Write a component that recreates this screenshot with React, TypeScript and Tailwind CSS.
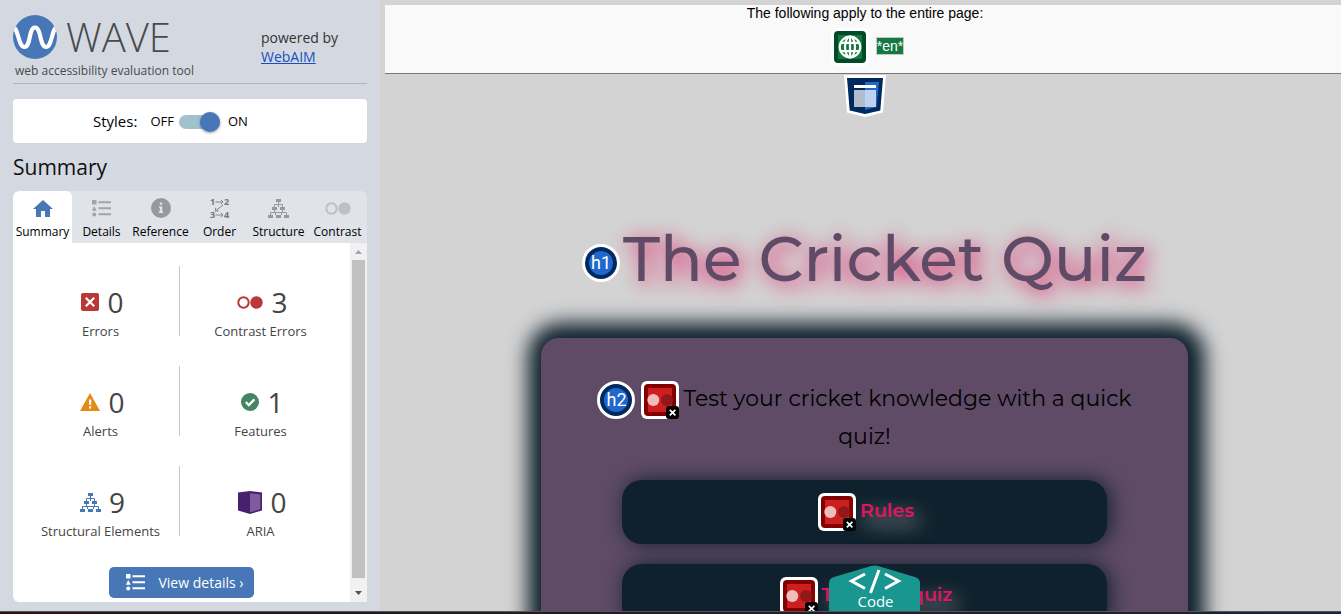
import React, { useState } from "react";

type IconProps = { className?: string };

function WaveLogo() {
  return (
    <svg viewBox="0 0 44 44" className="size-11 shrink-0" aria-hidden="true">
      <clipPath id="logo-disc">
        <circle cx="22" cy="22" r="22" />
      </clipPath>
      <circle cx="22" cy="22" r="22" fill="#4777b7" />
      <path
        d="M-1 11.5C5.500 11.500 5 32 11.500 32S15.500 12.500 22 12.500 26.500 32 33 32 38.500 11.500 45 11.500"
        fill="none"
        stroke="#fff"
        strokeWidth="4.200"
        clipPath="url(#logo-disc)"
      />
    </svg>
  );
}

function HomeIcon({ className }: IconProps) {
  return (
    <svg viewBox="0 0 20 17" width="20" height="17" className={className} fill="#4777b7" aria-hidden="true">
      <path d="M10 0 20 9h-3v8h-5v-6H8v6H3V9H0z" />
    </svg>
  );
}

function ListIcon({ className }: IconProps) {
  return (
    <svg viewBox="0 0 19 17" width="19" height="17" className={className} fill="currentColor" aria-hidden="true">
      <path d="M0 0h4.500v4.500H0zM2.200 6 4.700 10.800H-.2zM6.500 1.300H19v2H6.500zM6.500 7.300H19v2H6.500zM6.500 13.300H19v2H6.500z" />
      <circle cx="2.200" cy="14.500" r="2" />
    </svg>
  );
}

function InfoIcon({ className }: IconProps) {
  return (
    <svg viewBox="0 0 20 20" width="20" height="20" className={className} aria-hidden="true">
      <circle cx="10" cy="10" r="10" fill="#97999c" />
      <path d="M8.800 4.500h2.400v2.200H8.800zM8 8.200h3.200v5.300h1v1.500H7.800v-1.500h1V9.700H8z" fill="#e0e3e7" />
    </svg>
  );
}

function OrderIcon({ className }: IconProps) {
  return (
    <svg viewBox="-2 -4 24 29" width="24" height="29" className={className} aria-hidden="true">
      <g fill="#75777a" fontFamily="Open Sans, sans-serif" fontSize="9" fontWeight="700">
        <text x="0" y="7">1</text>
        <text x="14" y="7">2</text>
        <text x="0" y="20">3</text>
        <text x="14" y="20">4</text>
      </g>
      <path d="M5.500 4H13M10.800 1.800 13 4l-2.200 2.200M5.500 17H13M10.800 14.800 13 17l-2.200 2.200M13 7 5.500 12.800M5.700 9.800l-.5 3.300 3.500-.3" fill="none" stroke="#85878a" />
    </svg>
  );
}

function StructureIcon({ className }: IconProps) {
  return (
    <svg viewBox="0 0 21 19" width="21" height="19" className={className} aria-hidden="true">
      <path d="M10.500 3v5M6.500 8V5.500h8V8M6.500 10v3M14.500 10v3M2.500 16v-2.500h16V16M7.500 16v-2.500M13.500 16v-2.500" fill="none" stroke="currentColor" />
      <path d="M8 0h5v3H8zM4 8h5v3H4zM12 8h5v3h-5zM0 16h5v3H0zM8 16h5v3H8zM16 16h5v3h-5z" fill="currentColor" />
    </svg>
  );
}

function ContrastIcon({ className }: IconProps) {
  return (
    <svg viewBox="0 0 26 13" width="26" height="13" className={className} aria-hidden="true">
      <circle cx="6.500" cy="6.500" r="5.200" fill="none" stroke="currentColor" strokeWidth="2" />
      <circle cx="19.500" cy="6.500" r="6.200" fill="currentColor" />
    </svg>
  );
}

function ErrorIcon() {
  return (
    <svg viewBox="0 0 18 18" width="18" height="18" aria-hidden="true">
      <rect width="18" height="18" rx="2" fill="#b93838" />
      <path d="m4.800 4.800 8.400 8.400m0-8.400-8.400 8.400" stroke="#fff" strokeWidth="2.200" />
    </svg>
  );
}

function AlertIcon() {
  return (
    <svg viewBox="0 0 20 18" width="20" height="18" aria-hidden="true">
      <path d="M10 0 20 18H0z" fill="#e38b17" />
      <path d="M9 6.500h2.200v5.200H9zM9 13.300h2.200v2.200H9z" fill="#fff" />
    </svg>
  );
}

function FeatureIcon() {
  return (
    <svg viewBox="0 0 18 18" width="18" height="18" aria-hidden="true">
      <circle cx="9" cy="9" r="9" fill="#448564" />
      <path d="m4.800 9 3 3 5.600-5.600" stroke="#fff" strokeWidth="2.300" fill="none" />
    </svg>
  );
}

function AriaIcon() {
  return (
    <svg viewBox="0 0 24 23" width="24" height="23" aria-hidden="true">
      <path d="M0 1.500 12 0l12 1.500v18L12 23 0 19.500z" fill="#47216f" />
      <path d="m12 2.200 10.300 1.200v14.800L12 21.200z" fill="#7f5b9d" />
    </svg>
  );
}

const tabs = [
  { name: "Summary", icon: <HomeIcon /> },
  { name: "Details", icon: <ListIcon className="text-[#a2a4a7]" /> },
  { name: "Reference", icon: <InfoIcon /> },
  { name: "Order", icon: <OrderIcon /> },
  { name: "Structure", icon: <StructureIcon className="text-[#97999c]" /> },
  { name: "Contrast", icon: <ContrastIcon className="text-[#bdc0c5]" /> },
];

const totals = [
  { label: "Errors", count: 0, icon: <ErrorIcon /> },
  { label: "Contrast Errors", count: 3, icon: <ContrastIcon className="text-[#b93838]" /> },
  { label: "Alerts", count: 0, icon: <AlertIcon /> },
  { label: "Features", count: 1, icon: <FeatureIcon /> },
  { label: "Structural Elements", count: 9, icon: <StructureIcon className="text-[#4777b7]" /> },
  { label: "ARIA", count: 0, icon: <AriaIcon /> },
];

function Sidebar() {
  const [styles, setStyles] = useState(true);
  const [tab, setTab] = useState("Summary");
  return (
    <aside className="flex w-[380px] shrink-0 flex-col bg-[#d4d9e1] px-[13px] pb-[9px] font-['Open_Sans',sans-serif]">
      <header className="flex h-[84px] shrink-0 justify-between border-b border-[#b2b6ba] pt-[15px]">
        <div className="text-[#484a4d]">
          <div className="flex items-center gap-[9px]">
            <WaveLogo />
            <span className="text-[40px] leading-[44px] font-light">WAVE</span>
          </div>
          <p className="pl-[2px] text-xs leading-6">web accessibility evaluation tool</p>
        </div>
        <p className="w-[106px] pt-[13px] text-sm leading-[19px] text-[#333]">
          powered by
          <br />
          <a href="#webaim" className="text-[#1550c0] underline">WebAIM</a>
        </p>
      </header>

      <label className="mt-[15px] flex h-11 shrink-0 items-center rounded bg-white pt-px pl-20 text-black">
        <span className="text-[15px]">Styles:</span>
        <span className="ml-[13px] text-[13px]">OFF</span>
        <input
          type="checkbox"
          role="switch"
          checked={styles}
          onChange={(e) => setStyles(e.target.checked)}
          className="mx-[5px] mt-px flex h-[14px] w-[41px] appearance-none items-center rounded-full bg-[#a1c2cc] before:size-5 before:shrink-0 before:rounded-full before:bg-[#4777b7] before:shadow-[0_1px_3px_rgba(0,0,0,0.4)] checked:justify-end"
        />
        <span className="ml-[3px] text-[13px]">ON</span>
      </label>

      <h1 className="mt-2 mb-2 text-[21px] leading-8 text-[#111]">Summary</h1>

      <nav className="grid h-[52px] shrink-0 grid-cols-6 overflow-hidden rounded-t-md bg-[#e0e3e7]">
        {tabs.map((t) => (
          <button
            key={t.name}
            onClick={() => setTab(t.name)}
            className={
              "flex flex-col items-center rounded-t-md pt-[5px] text-xs leading-4 text-black " +
              (tab === t.name ? "bg-white" : "")
            }
          >
            <span className="flex h-[24px] items-center">{t.icon}</span>
            <span className="mt-1">{t.name}</span>
          </button>
        ))}
      </nav>

      <section className="flex min-h-0 flex-1 overflow-hidden rounded-bl-md bg-white">
        <div className="min-w-0 flex-1 overflow-hidden px-[9px] pt-[23px]">
          <ul className="grid grid-cols-[158px_1fr] gap-y-[30px]">
            {totals.map((t) => (
              <li
                key={t.label}
                className="flex h-[70px] flex-col items-center border-[#c9c9c9] pt-4 text-[#444] odd:border-r"
              >
                <div className="flex items-center gap-2 pl-1">
                  {t.icon}
                  <span className="text-[28px] leading-10">{t.count}</span>
                </div>
                <span className="text-[13px] leading-[18px]">{t.label}</span>
              </li>
            ))}
          </ul>
          <button className="mx-auto mt-[31px] flex h-[31px] items-center gap-[13px] rounded-[5px] bg-[#4777b7] pr-[10px] pl-[17px] text-sm text-white">
            <ListIcon />
            View details ›
          </button>
        </div>
        <div className="flex w-[17px] shrink-0 flex-col items-center bg-[#f1f1f1]" aria-hidden="true">
          <svg viewBox="0 0 17 17" className="size-[17px]" fill="#a3a3a3">
            <path d="m8.500 7 3.500 4H5z" />
          </svg>
          <div className="w-[13px] flex-1 bg-[#c1c1c1]" />
          <svg viewBox="0 0 17 24" className="h-6 w-[17px]" fill="#505050">
            <path d="m8.500 17-3.500-4h7z" />
          </svg>
        </div>
      </section>
    </aside>
  );
}

function HeadingBadge({ level }: { level: number }) {
  return (
    <span className="inline-flex size-[38px] shrink-0 items-center justify-center rounded-full border-3 border-white bg-[#00295e] align-middle">
      <span className="flex size-6 items-center justify-center rounded-full bg-[#2068cd] font-[Roboto,sans-serif] text-lg leading-6 font-normal text-white">
        h{level}
      </span>
    </span>
  );
}

function ContrastBadge() {
  return (
    <svg viewBox="0 0 38 38" className="inline-block size-[38px] shrink-0 align-middle" aria-label="Very low contrast">
      <rect width="38" height="38" rx="6" fill="#fff" />
      <rect x="3" y="3" width="32" height="32" rx="4" fill="#830000" />
      <rect x="7" y="7" width="24" height="24" fill="#cc2020" />
      <circle cx="26" cy="19" r="6" fill="#921818" />
      <circle cx="12.300" cy="19" r="6" fill="#f0bcbc" />
      <rect x="25" y="25" width="13" height="13" rx="3" fill="#000" />
      <path d="m28.800 28.800 5.600 5.600m0-5.600-5.600 5.600" stroke="#fff" strokeWidth="1.700" />
    </svg>
  );
}

function LanguageBadge() {
  return (
    <svg viewBox="0 0 38 38" className="size-[38px]" aria-label="Language">
      <rect width="38" height="38" rx="6" fill="#fff" />
      <rect x="3" y="3" width="32" height="32" rx="4" fill="#004a25" />
      <rect x="7" y="7" width="24" height="24" fill="#147843" />
      <g fill="none" stroke="#fff" strokeWidth="2.200">
        <circle cx="19" cy="19" r="10.300" />
        <ellipse cx="19" cy="19" rx="5" ry="10.300" />
        <path d="M19 8.500v21M10 14.800h18M10 23.200h18" />
      </g>
    </svg>
  );
}

function MainBadge() {
  return (
    <svg viewBox="0 0 42 42" className="h-[42px] w-[42px]" aria-label="Main content">
      <path d="M0 0h42l-3 37.500L21 42 3 37.500z" fill="#fff" />
      <path d="M3 3h36l-2.700 32.500L21 39 5.700 35.500z" fill="#00295e" />
      <path d="M21 7h14l-2.500 25L21 35z" fill="#2068cd" />
      <path d="M10 10h22v3H10z" fill="#fff" />
      <path d="M10 15h11v17H10z" fill="#b1bdcd" />
      <path d="M21 15h11v17H21z" fill="#bdd2f0" />
    </svg>
  );
}

function QuizLink({ children }: { children: React.ReactNode }) {
  return (
    <a
      href="#quiz"
      className="flex h-16 w-3/4 shrink-0 items-center justify-center gap-1 rounded-[20px] bg-[#0f212c] pl-[3px] text-[19px] leading-6 font-semibold text-[#e0145f] shadow-[3px_0_20px_#0f212c]"
    >
      <ContrastBadge />
      <span className="pb-[2px] [text-shadow:5px_8px_20px_#d3d3d3]">{children}</span>
    </a>
  );
}

function Page() {
  return (
    <main className="relative flex min-w-0 flex-1 flex-col overflow-hidden border-t-[5px] border-l-[5px] border-[#d3d3d3] bg-[#d3d3d3]">
      <div className="flex h-[69px] shrink-0 flex-col items-center border-b border-[#777] bg-[#f9f9f9] pl-1 font-['Liberation_Sans',sans-serif] text-sm text-black">
        <p className="leading-[17px]">The following apply to the entire page:</p>
        <div className="mt-[6px] flex items-center gap-[7px] pl-[5px]">
          <LanguageBadge />
          <span className="mb-[2px] border border-[#c8c8c8] bg-[#147843] leading-4 text-white">*en*</span>
        </div>
      </div>

      <div className="flex flex-1 flex-col items-center pl-[3px] font-[Montserrat,Inter,sans-serif]">
        <div className="mt-px shrink-0">
          <MainBadge />
        </div>
        <h1 className="mt-[102px] flex shrink-0 items-center gap-[3px] text-[63px] leading-[80px] font-medium whitespace-nowrap text-[#5f4b66] [text-shadow:4px_4px_20px_#e0145f]">
          <span className="mt-2 flex [text-shadow:none]">
            <HeadingBadge level={1} />
          </span>
          The Cricket Quiz
        </h1>
        <section className="mt-[39px] flex w-[67.8%] shrink-0 flex-col items-center gap-5 rounded-[18px] bg-[#5f4b66] pt-[42px] pb-10 shadow-[2px_0_20px_15px_#0f212c]">
          <h2 className="w-full max-w-[570px] pb-1 text-center text-[22px] leading-[38px] text-black">
            <span className="-my-1 mr-1 inline-flex gap-[6px] align-middle">
              <HeadingBadge level={2} />
              <ContrastBadge />
            </span>
            Test your cricket knowledge with a quick quiz!
          </h2>
          <QuizLink>Rules</QuizLink>
          <QuizLink>Take the quiz</QuizLink>
        </section>
      </div>

      <button className="absolute bottom-0 left-1/2 ml-[-34px] flex h-[46px] w-[91px] items-end justify-center pl-[2px] font-['Open_Sans',sans-serif] text-[15px] leading-5 text-white">
        <svg viewBox="0 0 91 46" className="absolute inset-0 size-full" aria-hidden="true">
          <path d="M0 46V18q0-4.500 5-6L42 1q3.500-1 7 0l37 11q5 1.500 5 6v28z" fill="#18968f" />
          <path d="M36 9 22.500 16 36 23.500M56 9l13.500 7L56 23.500M50 5l-8.500 23" fill="none" stroke="#fff" strokeWidth="3" />
        </svg>
        <span className="relative">Code</span>
      </button>
    </main>
  );
}

export default function App() {
  return (
    <div className="flex h-screen flex-col overflow-hidden">
      <div className="flex min-h-0 flex-1">
        <Sidebar />
        <Page />
      </div>
      <div className="h-[3px] shrink-0 border-t border-[#555] bg-linear-to-r from-[#2a1212] to-[#17233f]" />
    </div>
  );
}
